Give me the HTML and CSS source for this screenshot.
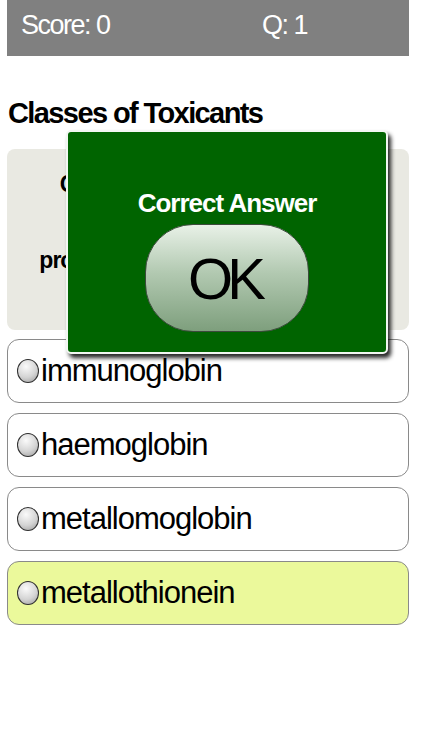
FILE: index.html
```html
<!DOCTYPE html>
<html lang="en">
<head>
    <meta charset="UTF-8">
    <meta name="viewport" content="width=device-width, initial-scale=1.0">
    <title>Classes of Toxicants</title>
    <link rel="stylesheet" href="styles.css">
</head>
<body>
    <div class="page">
      <div class="topbar">
        <span class="score">Score: 0</span>
        <span class="qnum">Q: 1</span>
      </div>

      <h1 class="title">Classes of Toxicants</h1>

      <div class="question">
        <p>Cadmium in liver and kidneys</p>
        <p>is mostly bound to a</p>
        <p>protein known as which of these?</p>
      </div>

      <div class="answers">
        <div class="answer">
          <span class="radio"></span>
          <span class="label">immunoglobin</span>
        </div>
        <div class="answer">
          <span class="radio"></span>
          <span class="label">haemoglobin</span>
        </div>
        <div class="answer">
          <span class="radio"></span>
          <span class="label">metallomoglobin</span>
        </div>
        <div class="answer correct">
          <span class="radio"></span>
          <span class="label">metallothionein</span>
        </div>
      </div>

      <!-- result popup sits over the question -->
      <div class="popup">
        <h2>Correct Answer</h2>
        <button class="ok-btn">OK</button>
      </div>
    </div>
</body>
</html>
```

FILE: styles.css
```css
body {
  margin: 0;
  background-color: #fff;
  font-family: "Liberation Sans", Arial, sans-serif;
  color: #000;
}

.page {
  position: relative;
  width: 402px;
  padding-left: 7px;
}

.topbar {
  display: grid;
  grid-template-columns: 241px 1fr;
  height: 56px;
  padding-left: 14px;
  background-color: #808080;
  color: #fff;
  font-size: 27px;
  line-height: 50px;
  letter-spacing: -1.5px;
}

.title {
  margin: 41px 0 19px 1px;
  font-size: 29px;
  line-height: 33px;
  letter-spacing: -1.6px;
  font-weight: bold;
}

.question {
  height: 165px;
  padding-top: 16px;
  border-radius: 8px;
  background-color: #e9e9e2;
  text-align: center;
}

.question p {
  margin: 0;
  font-size: 23px;
  font-weight: bold;
  line-height: 38px;
  letter-spacing: -1px;
}

.answers {
  display: flex;
  flex-direction: column;
  gap: 10px;
  margin-top: 9px;
}

.answer {
  display: flex;
  align-items: center;
  height: 62px;
  padding-left: 9px;
  border: 1px solid #8a8a8a;
  border-radius: 12px;
  background-color: #fff;
}

.answer.correct {
  background-color: #ebf99b;
}

.radio {
  flex: none;
  width: 20px;
  height: 22px;
  margin-right: 2px;
  border: 1px solid #2e2e2e;
  border-radius: 50%;
  background: radial-gradient(circle at 40% 30%, #fafafa 0%, #d4d4d4 55%, #9a9a9a 100%);
}

.answer .label {
  font-size: 31px;
  line-height: 36px;
  letter-spacing: -1px;
}

.popup {
  position: absolute;
  left: 66px;
  top: 130px;
  box-sizing: border-box;
  width: 322px;
  height: 224px;
  padding-top: 55px;
  border: 2px solid #f2f7f2;
  border-radius: 5px;
  background-color: #006400;
  box-shadow: 3px 4px 4px rgba(0, 0, 0, 0.85);
  text-align: center;
}

.popup h2 {
  margin: 0;
  color: #fff;
  font-size: 26px;
  line-height: 32px;
  letter-spacing: -1px;
}

.ok-btn {
  display: block;
  width: 164px;
  height: 108px;
  margin: 5px 0 0 77px;
  padding: 0;
  border: 1px solid #3c4a3c;
  border-radius: 48px;
  background: linear-gradient(#e8f1e7 0%, #b2c9b1 45%, #7e9f7d 100%);
  color: #000;
  font-family: "Liberation Sans", Arial, sans-serif;
  font-size: 58px;
  letter-spacing: -6px;
  text-indent: -6px;
}
```
